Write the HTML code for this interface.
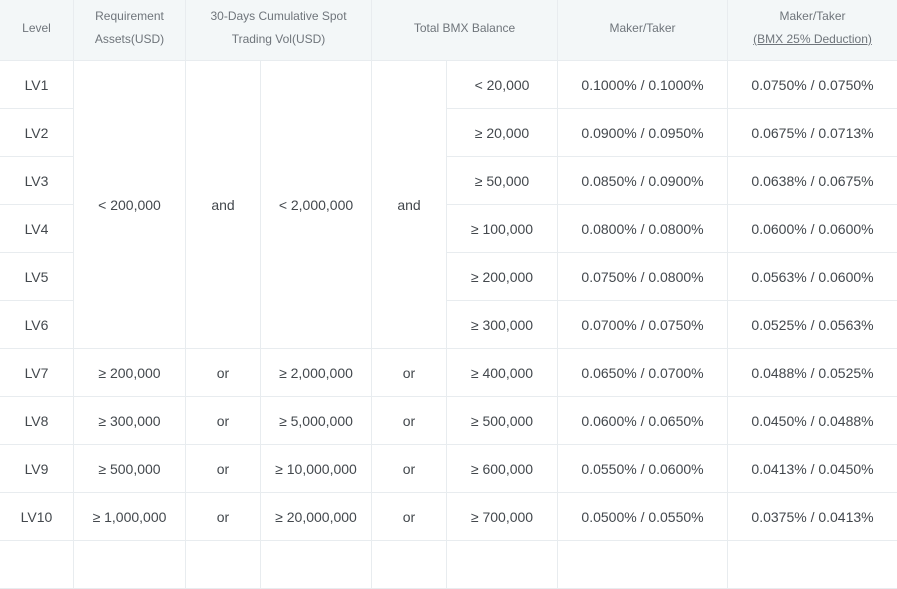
<!DOCTYPE html>
<html><head><meta charset="utf-8"><style>
body{margin:0;background:#fff;width:897px;height:546px;overflow:hidden;font-family:"Liberation Sans",sans-serif;}
table{border-collapse:collapse;table-layout:fixed;width:898px;position:absolute;left:-1px;top:0;}
td,th{border:1px solid #e8ecef;text-align:center;padding:0;color:#43484d;font-size:14px;font-weight:normal;height:47px;}
th{background:#f3f7f8;color:#6f757b;font-size:12px;line-height:23px;height:56px;border-top:none;padding-bottom:4px;}
u{color:#6f757b}
</style></head><body>
<table>
<colgroup><col style="width:74px"><col style="width:112px"><col style="width:75px"><col style="width:111px"><col style="width:75px"><col style="width:111px"><col style="width:170px"><col style="width:170px"></colgroup>
<tr><th>Level</th><th>Requirement<br>Assets(USD)</th><th colspan="2">30-Days Cumulative Spot<br>Trading Vol(USD)</th><th colspan="2">Total BMX Balance</th><th>Maker/Taker</th><th>Maker/Taker<br><u>(BMX 25% Deduction)</u></th></tr>
<tr><td>LV1</td><td rowspan="6">&lt; 200,000</td><td rowspan="6">and</td><td rowspan="6">&lt; 2,000,000</td><td rowspan="6">and</td><td>&lt; 20,000</td><td>0.1000% / 0.1000%</td><td>0.0750% / 0.0750%</td></tr>
<tr><td>LV2</td><td>≥ 20,000</td><td>0.0900% / 0.0950%</td><td>0.0675% / 0.0713%</td></tr>
<tr><td>LV3</td><td>≥ 50,000</td><td>0.0850% / 0.0900%</td><td>0.0638% / 0.0675%</td></tr>
<tr><td>LV4</td><td>≥ 100,000</td><td>0.0800% / 0.0800%</td><td>0.0600% / 0.0600%</td></tr>
<tr><td>LV5</td><td>≥ 200,000</td><td>0.0750% / 0.0800%</td><td>0.0563% / 0.0600%</td></tr>
<tr><td>LV6</td><td>≥ 300,000</td><td>0.0700% / 0.0750%</td><td>0.0525% / 0.0563%</td></tr>
<tr><td>LV7</td><td>≥ 200,000</td><td>or</td><td>≥ 2,000,000</td><td>or</td><td>≥ 400,000</td><td>0.0650% / 0.0700%</td><td>0.0488% / 0.0525%</td></tr>
<tr><td>LV8</td><td>≥ 300,000</td><td>or</td><td>≥ 5,000,000</td><td>or</td><td>≥ 500,000</td><td>0.0600% / 0.0650%</td><td>0.0450% / 0.0488%</td></tr>
<tr><td>LV9</td><td>≥ 500,000</td><td>or</td><td>≥ 10,000,000</td><td>or</td><td>≥ 600,000</td><td>0.0550% / 0.0600%</td><td>0.0413% / 0.0450%</td></tr>
<tr><td>LV10</td><td>≥ 1,000,000</td><td>or</td><td>≥ 20,000,000</td><td>or</td><td>≥ 700,000</td><td>0.0500% / 0.0550%</td><td>0.0375% / 0.0413%</td></tr>
<tr><td></td><td></td><td></td><td></td><td></td><td></td><td></td><td></td></tr>
</table>
</body></html>
